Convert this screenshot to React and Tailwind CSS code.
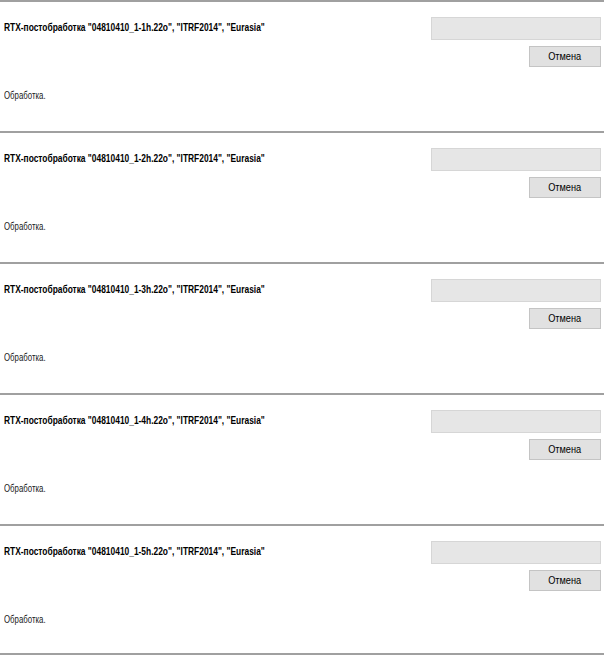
const jobs = [
  '04810410_1-1h.22o',
  '04810410_1-2h.22o',
  '04810410_1-3h.22o',
  '04810410_1-4h.22o',
  '04810410_1-5h.22o',
];

const Job = ({ file, last }) => {
  return (
    <div className={'border-t-2 border-[#a0a0a0] h-[131px] flex ' + (last ? 'border-b-2' : '')}>
      <div className="flex-1 pl-1">
        <div className="mt-[17px] h-4 leading-4 text-[11.5px] font-bold text-black whitespace-nowrap origin-left scale-x-[0.73]">
          RTX-постобработка "{file}", "ITRF2014", "Eurasia"
        </div>
        <div className="mt-[52px] h-4 leading-4 text-[11.5px] text-[#202020] whitespace-nowrap origin-left scale-x-[0.68]">
          Обработка.
        </div>
      </div>
      <div className="w-[170px] mr-[3px] pt-[15px] flex flex-col items-end">
        <div className="w-full h-[23px] bg-[#e6e6e6] border border-[#d6d6d6]" />
        <button className="mt-[6px] w-[72px] h-[21px] bg-[#e1e1e1] border border-[#c4c4c4] text-[11.5px] text-black">
          <span className="inline-block scale-x-[0.8]">Отмена</span>
        </button>
      </div>
    </div>
  );
};

export default function App() {
  return (
    <div
      className="w-[604px] h-[657px] bg-white overflow-hidden"
      style={{ fontFamily: '"Liberation Sans", Arial, sans-serif' }}
    >
      {jobs.map((f, i) => (
        <Job key={f} file={f} last={i === jobs.length - 1} />
      ))}
    </div>
  );
}
